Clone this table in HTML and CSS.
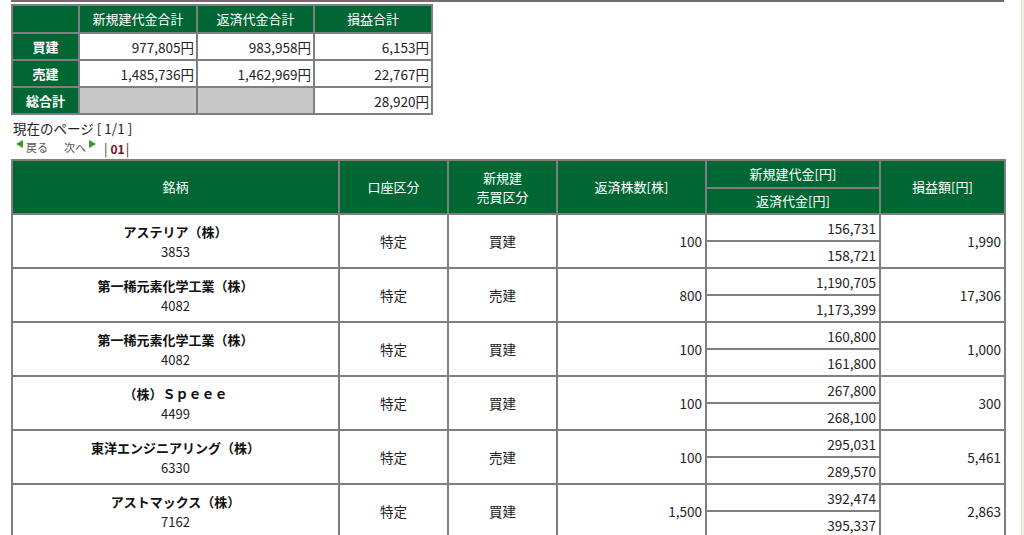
FILE: index.html
```html
<!DOCTYPE html>
<html lang="ja">
<head>
<meta charset="utf-8">
<link rel="stylesheet" href="styles.css">
</head>
<body>
<div class="page">
  <div class="main">
    <div class="topline"></div>
    <table class="summary">
      <colgroup><col class="s1"><col class="s2"><col class="s3"><col class="s4"></colgroup>
      <tr class="sh"><th></th><th>新規建代金合計</th><th>返済代金合計</th><th>損益合計</th></tr>
      <tr><th class="rh">買建</th><td>977,805円</td><td>983,958円</td><td>6,153円</td></tr>
      <tr><th class="rh">売建</th><td>1,485,736円</td><td>1,462,969円</td><td>22,767円</td></tr>
      <tr><th class="rh">総合計</th><td class="empty"></td><td class="empty"></td><td>28,920円</td></tr>
    </table>
    <div class="pageinfo">現在のページ [ 1/1 ]</div>
    <div class="nav">
      <span class="navlink"><svg class="tri" width="7" height="8" viewBox="0 0 7 8"><path d="M0 4 L7 0 L7 8 Z" fill="#3a9a2a"/></svg>戻る</span>
      <span class="navlink next">次へ<svg class="tri" width="7" height="8" viewBox="0 0 7 8"><path d="M7 4 L0 0 L0 8 Z" fill="#3a9a2a"/></svg></span>
      <span class="pages">|<b>01</b>|</span>
    </div>
    <table class="list">
      <colgroup><col class="c1"><col class="c2"><col class="c3"><col class="c4"><col class="c5"><col class="c6"></colgroup>
      <tr class="h1"><th rowspan="2">銘柄</th><th rowspan="2">口座区分</th><th rowspan="2" class="two">新規建<br>売買区分</th><th rowspan="2">返済株数[株]</th><th>新規建代金[円]</th><th rowspan="2">損益額[円]</th></tr>
      <tr class="h2"><th>返済代金[円]</th></tr>

      <tr><td rowspan="2" class="name"><b>アステリア（株）</b><br>3853</td><td rowspan="2" class="c">特定</td><td rowspan="2" class="c">買建</td><td rowspan="2" class="r">100</td><td class="r">156,731</td><td rowspan="2" class="r">1,990</td></tr>
      <tr><td class="r">158,721</td></tr>

      <tr><td rowspan="2" class="name"><b>第一稀元素化学工業（株）</b><br>4082</td><td rowspan="2" class="c">特定</td><td rowspan="2" class="c">売建</td><td rowspan="2" class="r">800</td><td class="r">1,190,705</td><td rowspan="2" class="r">17,306</td></tr>
      <tr><td class="r">1,173,399</td></tr>

      <tr><td rowspan="2" class="name"><b>第一稀元素化学工業（株）</b><br>4082</td><td rowspan="2" class="c">特定</td><td rowspan="2" class="c">買建</td><td rowspan="2" class="r">100</td><td class="r">160,800</td><td rowspan="2" class="r">1,000</td></tr>
      <tr><td class="r">161,800</td></tr>

      <tr><td rowspan="2" class="name"><b>（株）Ｓｐｅｅｅ</b><br>4499</td><td rowspan="2" class="c">特定</td><td rowspan="2" class="c">買建</td><td rowspan="2" class="r">100</td><td class="r">267,800</td><td rowspan="2" class="r">300</td></tr>
      <tr><td class="r">268,100</td></tr>

      <tr><td rowspan="2" class="name"><b>東洋エンジニアリング（株）</b><br>6330</td><td rowspan="2" class="c">特定</td><td rowspan="2" class="c">売建</td><td rowspan="2" class="r">100</td><td class="r">295,031</td><td rowspan="2" class="r">5,461</td></tr>
      <tr><td class="r">289,570</td></tr>

      <tr><td rowspan="2" class="name"><b>アストマックス（株）</b><br>7162</td><td rowspan="2" class="c">特定</td><td rowspan="2" class="c">買建</td><td rowspan="2" class="r">1,500</td><td class="r">392,474</td><td rowspan="2" class="r">2,863</td></tr>
      <tr><td class="r">395,337</td></tr>
    </table>
  </div>
  <div class="scrollstrip"></div>
</div>
</body>
</html>
```

FILE: styles.css
```css
html, body {
  margin: 0;
  padding: 0;
  background: #fff;
}
body {
  font-family: "Noto Sans CJK JP", "Noto Sans", sans-serif;
  font-size: 13px;
  color: #222;
  overflow: hidden;
}
.page {
  display: flex;
  height: 535px;
  overflow: hidden;
}
.main {
  flex: 1;
  padding-left: 11px;
}
.scrollstrip {
  width: 2px;
  border-left: 1px solid #e2e2da;
  background: #f0f0ea;
}
.topline {
  width: 993px;
  height: 2px;
  background: #6e6e6e;
  margin-bottom: 2px;
}
table {
  border-collapse: collapse;
  table-layout: fixed;
}
th, td {
  border: 2px solid #7f7f7f;
  padding: 0 3px;
  line-height: 18px;
}
th {
  background: #006633;
  color: #fff;
  font-weight: normal;
  text-align: center;
}
.summary { width: 420px; }
.s1 { width: 67px; }
.s2 { width: 118px; }
.s3 { width: 117px; }
.s4 { width: 118px; }
.summary tr { height: 27px; }
.summary tr.sh { height: 28px; }
.summary td {
  text-align: right;
  color: #222;
  padding-right: 2px;
  font-size: 13.5px;
}
.summary th.rh { font-weight: bold; }
.summary td.empty { background: #c8c8c8; }

.pageinfo {
  margin-top: 5px;
  padding-left: 2px;
  line-height: 17px;
  font-size: 13.5px;
  color: #222;
}
.nav {
  display: flex;
  align-items: center;
  height: 19px;
  padding-left: 5px;
  font-size: 11px;
  color: #555;
}
.navlink {
  display: flex;
  align-items: flex-start;
  gap: 3px;
  line-height: 14px;
}
.navlink.next { margin-left: 16px; }
.pages {
  margin-left: 8px;
  font-size: 13px;
  color: #333;
  margin-top: 4px;
}
.pages b {
  color: #7a0f0f;
  font-size: 12px;
  margin: 0 1px 0 3px;
}

.list { width: 993px; margin-top: 3px; }
.c1 { width: 327px; }
.c2 { width: 109px; }
.c3 { width: 109px; }
.c4 { width: 149px; }
.c5 { width: 174px; }
.c6 { width: 125px; }
.list tr { height: 27px; }
.list tr.h1 { height: 28px; }
.list tr.h2 { height: 26px; }
.list th.two { line-height: 19px; }
.list td { color: #222; font-size: 13.5px; }
.list td.name {
  text-align: center;
  line-height: 20px;
  padding-top: 1px;
  font-size: 13px;
}
.list td.name b { color: #111; }
.list td.c { text-align: center; }
.list td.r { text-align: right; padding-right: 3px; }
```
